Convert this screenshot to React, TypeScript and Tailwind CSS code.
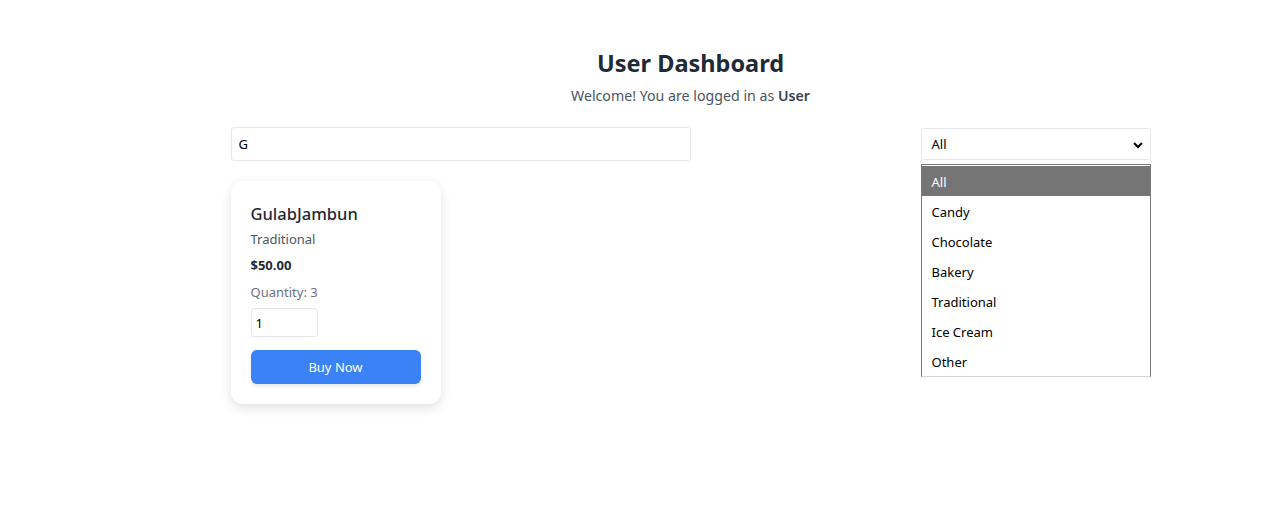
import { useState } from "react";

const categories = ["All", "Candy", "Chocolate", "Bakery", "Traditional", "Ice Cream", "Other"];

const sweets = [
  { id: 1, name: "GulabJambun", category: "Traditional", price: 50, quantity: 3 },
];

export default function App() {
  const [search, setSearch] = useState("G");
  const [category] = useState("All");
  const [qty, setQty] = useState("1");

  return (
    <div
      className="min-h-screen bg-white pl-[116px] text-[#1f2937]"
      style={{ fontFamily: '"Noto Sans", "Open Sans", sans-serif' }}
    >
      <div className="mx-auto max-w-[920px] pt-[46px]">
        {/* Header */}
        <div className="text-center">
          <h1 className="text-[23.5px] font-bold leading-[34px] text-[#1f2937]">User Dashboard</h1>
          <p className="mt-[4px] text-[14.2px] leading-[24px] text-[#4b5563]">
            Welcome! You are logged in as <span className="font-semibold text-[#374151]">User</span>
          </p>
        </div>

        {/* Filters */}
        <div className="mt-[19px] flex items-start justify-between">
          <input
            value={search}
            onChange={(e) => setSearch(e.target.value)}
            className="h-[34px] w-[460px] rounded-[3px] border border-[#e5e7eb] px-[7px] text-[13px] text-black outline-none"
          />
          <div className="relative mt-[1px] w-[230px]">
            <div className="flex h-[32px] items-center justify-between rounded-[3px] border border-[#e5e7eb] bg-white pl-[10px] pr-[6px] pt-[2px] text-[13px] text-black">
              <span>{category}</span>
              <svg width="12" height="12" viewBox="0 0 12 12">
                <path d="M2 4l4 4 4-4" fill="none" stroke="black" strokeWidth="2" />
              </svg>
            </div>
            {/* Open native-style option list */}
            <div className="absolute left-0 top-[36px] z-10 w-[230px] border border-[#767676] border-b-[#d4d4d4] bg-white pt-[1px] text-[13px] text-black">
              {categories.map((c) => (
                <div
                  key={c}
                  className={`flex h-[30px] items-center pl-[10px] pt-[3px] ${c === category ? "bg-[#757575] text-white" : ""}`}
                >
                  {c}
                </div>
              ))}
            </div>
          </div>
        </div>

        {/* Products */}
        <div className="mt-[20px] flex gap-4">
          {sweets.map((s) => (
            <div
              key={s.id}
              className="w-[210px] rounded-[12px] bg-white px-[20px] pb-[20px] pt-[21px] shadow-[0_4px_12px_rgba(0,0,0,0.12)]"
            >
              <h2 className="text-[16.5px] font-medium leading-[24px] text-[#1f2937]">{s.name}</h2>
              <p className="mt-[3px] text-[13px] leading-[20px] text-[#4b5563]">{s.category}</p>
              <p className="mt-[6px] text-[13px] font-bold leading-[20px] text-[#1f2937]">${s.price.toFixed(2)}</p>
              <p className="mt-[7px] text-[13px] leading-[20px] text-[#6b7280]">Quantity: {s.quantity}</p>
              <input
                type="text"
                value={qty}
                onChange={(e) => setQty(e.target.value)}
                className="mt-[6px] block h-[29px] w-[67px] rounded-[3px] border border-[#e5e7eb] px-[4px] text-[13px] text-black outline-none"
              />
              <button className="mt-[13px] block h-[34px] w-full rounded-[6px] bg-[#3b82f6] pt-[1px] text-[13px] text-white shadow-[0_2px_4px_rgba(0,0,0,0.1)]">
                Buy Now
              </button>
            </div>
          ))}
        </div>
      </div>
    </div>
  );
}
